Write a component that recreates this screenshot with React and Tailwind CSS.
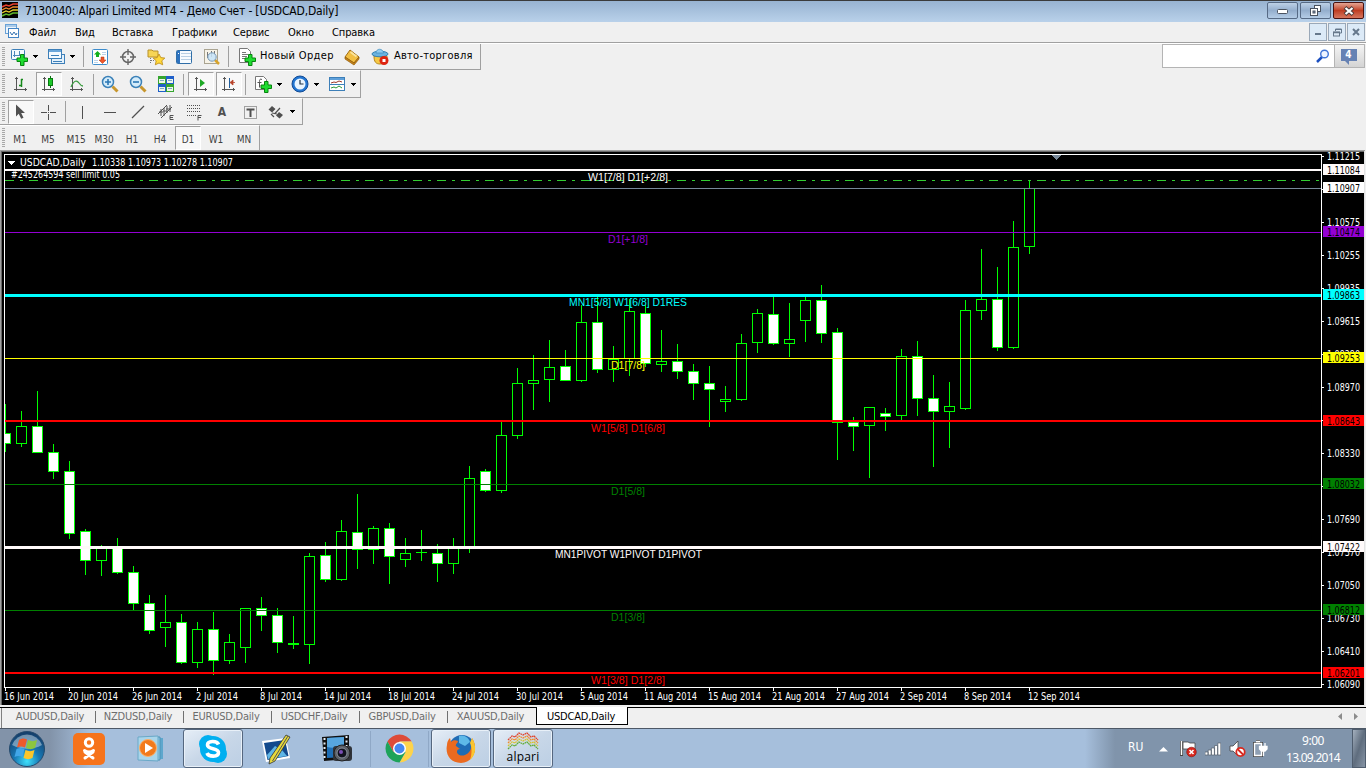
import React from "react";

// x step between bars is 16px, the first bar sits on x = 5
// [high, open/close top, open/close bottom, low, filled]
const candles = [
  [404, 433, 444, 452, 1], [411, 426, 444, 447, 0], [391, 426, 453, 453, 1], [444, 452, 472, 479, 1],
  [461, 471, 534, 539, 1], [529, 531, 561, 575, 1], [545, 546, 561, 576, 0], [538, 547, 573, 574, 1],
  [566, 572, 604, 610, 1], [595, 603, 631, 634, 1], [595, 622, 628, 647, 0], [614, 622, 663, 664, 1],
  [622, 629, 663, 668, 0], [612, 629, 661, 675, 1], [634, 642, 661, 664, 0], [608, 608, 648, 663, 0],
  [597, 608, 616, 631, 1], [608, 615, 643, 653, 1], [616, 643, 645, 649, 0], [553, 556, 645, 664, 0],
  [542, 555, 580, 582, 1], [520, 531, 580, 581, 0], [494, 532, 550, 569, 1], [526, 528, 550, 564, 0],
  [523, 528, 557, 584, 1], [538, 553, 560, 567, 0], [530, 552, 553, 561, 0], [544, 553, 564, 582, 1],
  [538, 546, 564, 574, 0], [466, 478, 548, 553, 0], [469, 471, 491, 492, 1], [421, 435, 491, 493, 0],
  [368, 383, 436, 439, 0], [355, 380, 384, 410, 0], [340, 367, 380, 402, 0], [350, 366, 381, 381, 1],
  [305, 322, 381, 382, 0], [297, 322, 370, 373, 1], [346, 359, 370, 382, 0], [299, 311, 359, 376, 0],
  [305, 313, 364, 367, 1], [330, 361, 365, 372, 0], [344, 361, 372, 379, 1], [364, 371, 384, 400, 1],
  [366, 383, 390, 427, 1], [386, 399, 402, 412, 0], [334, 343, 400, 401, 0], [309, 313, 343, 353, 0],
  [297, 314, 344, 345, 1], [303, 339, 344, 357, 0], [297, 300, 321, 342, 0], [285, 300, 334, 343, 1],
  [328, 332, 423, 460, 1], [417, 422, 427, 451, 1], [407, 407, 426, 478, 0], [408, 413, 417, 431, 1],
  [349, 356, 416, 420, 0], [341, 356, 399, 416, 1], [375, 398, 412, 467, 1], [382, 406, 412, 448, 0],
  [300, 310, 409, 410, 0], [249, 299, 311, 320, 0], [267, 299, 348, 351, 1], [221, 247, 348, 349, 0],
  [180, 188, 247, 254, 0],
];

const levels = [
  { y: 169, h: 2, color: "#fffafa", price: "1.11084", box: 164, text: "W1[7/8] D1[+2/8]", x: 588, w: 80, base: 181 },
  { y: 232, h: 1, color: "#9400d3", price: "1.10474", box: 226, text: "D1[+1/8]", x: 608, w: 40, base: 243 },
  { y: 294, h: 3, color: "#00ffff", price: "1.09863", box: 289, text: "MN1[5/8] W1[6/8] D1RES", x: 569, w: 118, base: 306 },
  { y: 358, h: 1, color: "#ffff00", price: "1.09253", box: 352, text: "D1[7/8]", x: 611, w: 34, base: 369 },
  { y: 420, h: 2, color: "#ff0000", price: "1.08643", box: 415, text: "W1[5/8] D1[6/8]", x: 591, w: 74, base: 432 },
  { y: 484, h: 1, color: "#008000", price: "1.08032", box: 478, text: "D1[5/8]", x: 611, w: 34, base: 495 },
  { y: 546, h: 3, color: "#fffafa", price: "1.07422", box: 541, text: "MN1PIVOT W1PIVOT D1PIVOT", x: 555, w: 147, base: 558 },
  { y: 610, h: 1, color: "#008000", price: "1.06812", box: 604, text: "D1[3/8]", x: 611, w: 34, base: 621 },
  { y: 672, h: 2, color: "#ff0000", price: "1.06201", box: 667, text: "W1[3/8] D1[2/8]", x: 591, w: 74, base: 684 },
];

const prices = [
  "1.11215", "", "1.10575", "1.10255", "1.09935", "1.09615", "1.09290", "1.08970", "",
  "1.08330", "", "1.07690", "1.07370", "1.07050", "1.06730", "1.06410", "1.06090",
];

const dates = [
  ["16 Jun 2014", 50], ["20 Jun 2014", 50], ["26 Jun 2014", 50], ["2 Jul 2014", 42], ["8 Jul 2014", 42],
  ["14 Jul 2014", 47], ["18 Jul 2014", 47], ["24 Jul 2014", 47], ["30 Jul 2014", 47], ["5 Aug 2014", 48],
  ["11 Aug 2014", 53], ["15 Aug 2014", 53], ["21 Aug 2014", 53], ["27 Aug 2014", 53], ["2 Sep 2014", 47],
  ["8 Sep 2014", 47], ["12 Sep 2014", 52],
];

const menu = [
  ["Файл", "w-[46px]"], ["Вид", "w-[37px]"], ["Вставка", "w-[60px]"], ["Графики", "w-[61px]"],
  ["Сервис", "w-[55px]"], ["Окно", "w-[44px]"], ["Справка", "w-[60px]"],
];

const frames = ["M1", "M5", "M15", "M30", "H1", "H4", "D1", "W1", "MN"];
const tabs = ["AUDUSD,Daily", "NZDUSD,Daily", "EURUSD,Daily", "USDCHF,Daily", "GBPUSD,Daily", "XAUUSD,Daily"];

function ChartText({ x, y, w, fill = "#fff", arial, children }) {
  return (
    <text
      x={x}
      y={y}
      fill={fill}
      fontSize={arial ? 11.5 : 10.8}
      textLength={w}
      lengthAdjust="spacingAndGlyphs"
      className={arial ? "font-['Liberation_Sans',sans-serif]" : "font-['DejaVu_Sans_Condensed','DejaVu_Sans',sans-serif]"}
    >
      {children}
    </text>
  );
}

function Chart() {
  return (
    <svg width="1366" height="557" viewBox="0 150 1366 557" className="block" shapeRendering="crispEdges">
      <rect x="0" y="150" width="1366" height="557" fill="#f0f0f0" />
      <rect x="0" y="150" width="1365" height="555" fill="#a0a0a0" />
      <rect x="1" y="151" width="1364" height="554" fill="#696969" />
      <rect x="2" y="152" width="1362" height="553" fill="#000" />
      <rect x="1364" y="151" width="1" height="555" fill="#e3e3e3" />

      {/* Bars */}
      <svg x="5" y="155" width="1316" height="532" viewBox="5 155 1316 532">
        {candles.map(([high, top, bottom, low, filled], i) => {
          const x = 5 + i * 16;
          return (
            <g key={i}>
              <rect x={x} y={high} width="1" height={low - high} fill="#0f0" />
              <rect x={x - 5} y={top} width="11" height={bottom - top} fill="#0f0" />
              {bottom - top > 2 && (
                <rect x={x - 4} y={top + 1} width="9" height={bottom - top - 2} fill={filled ? "#fff" : "#000"} />
              )}
            </g>
          );
        })}
      </svg>

      <ChartText x={11} y={178} w={109}>#245264594 sell limit 0.05</ChartText>

      {/* Pending order and bid price */}
      {Array.from({ length: 55 }, (_, i) => (
        <g key={i} fill="#32cd32">
          <rect x={5 + i * 24} y="180" width="9" height="1" />
          <rect x={20 + i * 24} y="180" width="3" height="1" />
        </g>
      ))}
      <rect x="5" y="188" width="1316" height="1" fill="#778899" />

      {levels.map((l) => (
        <g key={l.y}>
          <rect x="5" y={l.y} width="1316" height={l.h} fill={l.color} />
          <ChartText arial x={l.x} y={l.base} w={l.w} fill={l.color}>{l.text}</ChartText>
        </g>
      ))}

      {/* Frame */}
      <rect x="4" y="154" width="1318" height="1" fill="#fff" />
      <rect x="4" y="154" width="1" height="534" fill="#fff" />
      <rect x="4" y="687" width="1318" height="1" fill="#fff" />
      <rect x="1321" y="154" width="1" height="534" fill="#fff" />
      <path d="M1052 155h9v1h-1v1h-1v1h-1v1h-1v1h-1v-1h-1v-1h-1v-1h-1v-1h-1z" fill="#778899" />

      <path d="M8 161h7v1h-1v1h-1v1h-1v1h-1v-1h-1v-1h-1v-1h-1z" fill="#fff" />
      <ChartText x={20} y={166} w={66}>USDCAD,Daily</ChartText>
      <ChartText x={92} y={166} w={141}>1.10338 1.10973 1.10278 1.10907</ChartText>

      {/* Price scale */}
      <svg x="1322" y="152" width="42" height="545" viewBox="1322 152 42 545">
        {prices.map((p, i) => (
          <g key={i}>
            <rect x="1322" y={156 + i * 33} width="2" height="1" fill="#fff" />
            {p && <ChartText x={1327} y={159.500 + i * 33} w={33}>{p}</ChartText>}
          </g>
        ))}
        {levels.map((l) => (
          <g key={l.y}>
            <rect x="1323" y={l.box} width="41" height="11" fill={l.color} />
            <ChartText x={1327} y={l.box + 9.500} w={33} fill="#000">{l.price}</ChartText>
          </g>
        ))}
        <rect x="1323" y="182" width="41" height="11" fill="#fff" />
        <ChartText x={1327} y={191.500} w={33} fill="#000">1.10907</ChartText>
      </svg>

      {/* Time scale */}
      {dates.map(([d, w], i) => (
        <g key={d}>
          <rect x={5 + i * 64} y="688" width="1" height="3" fill="#fff" />
          <ChartText x={4 + i * 64} y={700} w={w}>{d}</ChartText>
        </g>
      ))}
    </svg>
  );
}

function Icon({ children, size = 18 }) {
  return (
    <svg width={size} height={size} viewBox="0 0 18 18" className="shrink-0 block">
      {children}
    </svg>
  );
}

const plus = <path d="M10.500 6.500h3.500v3.500h3.500v3.500H14V17.500h-3.500V13.500H7V10h3.500z" fill="#1fdc30" stroke="#07830f" />;
const axes = <path d="M4.500 2v14M2 14.500h13M3 3.500h3M13.500 13v3" stroke="#555" fill="none" />;

const icons = {
  newChart: (
    <Icon>
      <rect x="1.500" y="1.500" width="13" height="10" rx="1" fill="#f4faff" stroke="#3d7fb8" />
      <path d="M4.500 3v6M3 7.500h9M9.500 3v5" stroke="#4b87ba" fill="none" />
      {plus}
    </Icon>
  ),
  profiles: (
    <Icon>
      <rect x="4.500" y="6.500" width="13" height="9" fill="#e3f1fc" stroke="#3d7fb8" />
      <rect x="1.500" y="1.500" width="13" height="9" fill="#f4faff" stroke="#3d7fb8" />
      <path d="M2 3h12" stroke="#6ba7db" strokeWidth="2" />
      <path d="M4 7.500h8M6 13.500h9" stroke="#3d7fb8" />
    </Icon>
  ),
  market: (
    <Icon>
      <rect x="1.500" y="1.500" width="15" height="15" rx="1" fill="#fff" stroke="#3d8ccc" />
      <path d="M6.500 3l3.500 3.500H8V9H5V6.500H3z" fill="#13b01c" />
      <path d="M11.500 15.500L8 12h2V9h3v3h2z" fill="#f0562a" stroke="#a8300f" strokeWidth=".5" />
      <path d="M11 4.500h4M11 6.500h4M3 12.500h4M3 14.500h4" stroke="#bcd3e8" />
    </Icon>
  ),
  target: (
    <Icon>
      <circle cx="9" cy="9" r="5.500" fill="none" stroke="#666" strokeWidth="1.500" />
      <path d="M9 1v6M9 11v6M1 9h6M11 9h6" stroke="#666" strokeWidth="1.400" />
    </Icon>
  ),
  navigator: (
    <Icon>
      <path d="M1 2h4l1 1h5v6H1z" fill="#f7d555" stroke="#b8912a" />
      <path d="M3.500 10v5M4 12.500h4" stroke="#777" strokeDasharray="1 1" />
      <path d="M12 6l1.800 3.600 4 .5-3 2.700.9 4L12 15l-3.700 1.800.9-4-3-2.700 4-.5z" fill="#ffd83b" stroke="#b9860f" strokeWidth=".8" />
    </Icon>
  ),
  terminal: (
    <Icon>
      <rect x="1.500" y="2.500" width="15" height="13" rx="1" fill="#f6fbff" stroke="#2f6ea8" />
      <rect x="2" y="3" width="3" height="12" fill="#2d72bf" />
      <path d="M6 5.500h10M6 8.500h10M6 11.500h10" stroke="#b8cfe4" />
      <path d="M3 5.500h1" stroke="#fff" />
    </Icon>
  ),
  tester: (
    <Icon>
      <rect x="1.500" y="1.500" width="13" height="14" fill="#f7f3e8" stroke="#aaa491" />
      <path d="M4.500 4v6M8.500 3v6M11.500 3v3" stroke="#777" />
      <path d="M12 12l4 4" stroke="#d8a42c" strokeWidth="2.500" />
      <circle cx="9" cy="9" r="4.200" fill="#c7e3f8" fillOpacity=".85" stroke="#7898b5" />
    </Icon>
  ),
  order: (
    <Icon>
      <path d="M1.500 .5h8l3 3v11h-11z" fill="#fff" stroke="#777" />
      <path d="M4 4.500h4M4 6.500h6M4 8.500h5M4 10.500h3" stroke="#777" />
      {plus}
    </Icon>
  ),
  book: (
    <Icon>
      <path d="M7 2l9 7-5 6-9-6z" fill="#f2bf43" stroke="#a06c12" />
      <path d="M2 9v2l9 6 5-6V9l-5 6z" fill="#c98517" stroke="#8f5c0c" strokeWidth=".7" />
      <path d="M7.500 4l6 4.500" stroke="#fbe39a" strokeWidth="2" />
    </Icon>
  ),
  expert: (
    <Icon>
      <path d="M3 8c0 6 2 8 6 8s7-3 7-8z" fill="#f5c945" stroke="#b5851a" />
      <ellipse cx="9" cy="6" rx="8" ry="2.800" fill="#6bb3df" stroke="#3381b3" />
      <path d="M5 5C5 0 12 0 12.500 5z" fill="#93cdf0" stroke="#3c8bbd" strokeWidth=".7" />
      <circle cx="13" cy="12.500" r="4.500" fill="#de2410" />
      <rect x="11.500" y="11" width="3" height="3" fill="#fff" />
    </Icon>
  ),
  bars: (
    <Icon>
      {axes}
      <path d="M9.500 4v8M11 4.500h-2M9 10.500H7" stroke="#15881b" strokeWidth="1.500" fill="none" />
    </Icon>
  ),
  candle: (
    <Icon>
      {axes}
      <path d="M10.500 1v12" stroke="#0a700f" />
      <rect x="8.500" y="3.500" width="4" height="7" fill="#1dc92a" stroke="#0a7a12" />
    </Icon>
  ),
  line: (
    <Icon>
      {axes}
      <path d="M3 12c3-7 6-7 8-4s3 3 4 3" stroke="#3a9c3f" strokeWidth="1.300" fill="none" />
    </Icon>
  ),
  zoomIn: (
    <Icon>
      <path d="M11.500 11.500l5 5" stroke="#c7962c" strokeWidth="3" />
      <circle cx="7" cy="7" r="5.500" fill="#d5ecfa" stroke="#3b81b8" strokeWidth="1.500" />
      <path d="M7 4v6M4 7h6" stroke="#2c78b5" strokeWidth="1.600" />
    </Icon>
  ),
  zoomOut: (
    <Icon>
      <path d="M11.500 11.500l5 5" stroke="#c7962c" strokeWidth="3" />
      <circle cx="7" cy="7" r="5.500" fill="#d5ecfa" stroke="#3b81b8" strokeWidth="1.500" />
      <path d="M4 7h6" stroke="#2c78b5" strokeWidth="1.600" />
    </Icon>
  ),
  tile: (
    <Icon>
      <path d="M1 1h8v8H1zM9 9h8v8H9z" fill="#35a52f" />
      <path d="M9 1h8v8H9zM1 9h8v8H1z" fill="#1f5fc9" />
      <path d="M2 4h6v4H2zM10 4h6v4h-6zM2 12h6v4H2zM10 12h6v4h-6z" fill="#eef7e9" />
      <path d="M3 5.500h4M11 5.500h4M3 13.500h4M11 13.500h4" stroke="#7fa9c4" />
    </Icon>
  ),
  scroll: (
    <Icon>
      {axes}
      <path d="M8 4l5 4-5 4z" fill="#1da825" />
    </Icon>
  ),
  shift: (
    <Icon>
      {axes}
      <path d="M9.500 3v10" stroke="#225f9c" />
      <path d="M10 7.500l3-2.500v5zM12 7.500h3" fill="#b8432a" stroke="#b8432a" strokeWidth=".8" />
    </Icon>
  ),
  indicator: (
    <Icon>
      <path d="M1.500 1.500h8l3 3v10h-11z" fill="#fff" stroke="#777" />
      <path d="M8 4.500c-2-1-2.500 0-2.500 2v6M3.500 7.500h4" stroke="#555" fill="none" />
      {plus}
    </Icon>
  ),
  clock: (
    <Icon>
      <circle cx="9" cy="9" r="8" fill="#2376d2" stroke="#114a94" />
      <circle cx="9" cy="9" r="5.500" fill="#e9f5ff" />
      <path d="M9 5v4h3.500" stroke="#234" fill="none" strokeWidth="1.200" />
    </Icon>
  ),
  template: (
    <Icon>
      <rect x="1.500" y="2.500" width="15" height="13" fill="#fff" stroke="#3d7fb8" />
      <rect x="2" y="3" width="14" height="2" fill="#5fa0da" />
      <path d="M2 9.500h14" stroke="#3d7fb8" />
      <path d="M3 8l3-1 2 .5 3-1.500 3 1" stroke="#a03a2a" fill="none" />
      <path d="M3 13l3-1 2 1 3-2 3 2" stroke="#2b9a35" fill="none" />
    </Icon>
  ),
  cursor: (
    <Icon>
      <path d="M4 1.500v12l2.700-2.700 2.500 5 2.300-1-2.300-4.800H13z" fill="#505050" />
    </Icon>
  ),
  cross: (
    <Icon>
      <path d="M8.500 2v6M8.500 11v6M1 9.500h6M10 9.500h6M8 9.500h1" stroke="#505050" />
    </Icon>
  ),
  vline: <Icon><path d="M9.500 3v13" stroke="#505050" /></Icon>,
  hline: <Icon><path d="M3 9.500h12" stroke="#505050" /></Icon>,
  trend: <Icon><path d="M3 15L15 3" stroke="#505050" strokeWidth="1.200" /></Icon>,
  channel: (
    <Icon>
      <path d="M1 11L10 2M4 15L15 4M4 6v7M7 5v8M10 3v7M13 2v7M2 9h4M6 8h4M9 6h5" stroke="#505050" fill="none" />
      <path d="M16.500 12.500h-3.500v4h3.500M13 14.500h3" stroke="#505050" fill="none" />
    </Icon>
  ),
  fibo: (
    <Icon>
      <path d="M2 2.500h14M2 5.500h14M2 8.500h14M2 12.500h9" stroke="#505050" strokeDasharray="1 1" />
      <path d="M16.500 12.500H13v5M13 14.500h3" stroke="#505050" fill="none" />
    </Icon>
  ),
  label: (
    <Icon>
      <path d="M3.500 3.500h12v12h-12z" fill="none" stroke="#505050" strokeDasharray="1 1" />
      <path d="M5.500 6.500h8M9.500 6v8" stroke="#505050" strokeWidth="2" fill="none" />
    </Icon>
  ),
  arrows: (
    <Icon>
      <path d="M5 3l3.500 3L5 9.500 1.500 6.500zM12 9l4 3-3.500 3.500L9 12.500z" fill="#505050" />
      <path d="M4 11l3 3M13 5l-5.500 6M5 10l5 1" stroke="#505050" strokeWidth="1.200" />
    </Icon>
  ),
};

const pressedBox =
  "w-[26px] h-[24px] flex items-center justify-center bg-[#f8f8f8] border border-t-[#a0a0a0] border-l-[#a0a0a0] border-r-white border-b-white";

function Tool({ icon, pressed }) {
  return (
    <div className="w-7 shrink-0 flex justify-center">
      <div className={pressed ? pressedBox : "w-[26px] h-[24px] flex items-center justify-center"}>
        {icons[icon]}
      </div>
    </div>
  );
}

function Drop({ icon }) {
  return (
    <div className="w-[37px] shrink-0 flex items-center pl-[3px]">
      {icons[icon]}
      <svg width="5" height="3" viewBox="0 0 5 3" className="ml-[5px]">
        <path d="M0 0h5v1H4v1H3v1H2V2H1V1H0z" fill="#000" />
      </svg>
    </div>
  );
}

const Sep = ({ className = "mx-0.5" }) => <div className={`w-px h-[21px] bg-[#a0a0a0] shrink-0 ${className}`} />;

function Grip() {
  return (
    <svg width="3" height="20" className="ml-0.5 mr-0.5 shrink-0">
      <path d="M1.500 0v20" stroke="#a8a8a8" strokeWidth="3" strokeDasharray="1 1" />
    </svg>
  );
}

function Bar({ className, children }) {
  return (
    <div className={`flex items-center border-b border-r border-[#a0a0a0] ${className}`}>
      <Grip />
      {children}
    </div>
  );
}

function TitleBar() {
  const btn = "w-[31px] h-[17px] rounded-[2px] border flex items-center justify-center";
  return (
    <div className="h-[22px] border-t border-[#3b3b3b] bg-gradient-to-b from-[#98b3d1] to-[#b9d1ea] flex items-start pl-0.5">
      <svg width="16" height="16" className="mt-px shrink-0">
        <rect width="16" height="16" fill="#000" />
        <path d="M0 5l4-2 3 1 4-2 5 0" stroke="#e8402e" strokeWidth="1.600" fill="none" />
        <path d="M0 8l4-2 3 1 4-2 5 0" stroke="#f08a2c" strokeWidth="1.300" fill="none" />
        <path d="M0 11l4-2 3 1 4-2 5 0" stroke="#e6d02c" strokeWidth="1.300" fill="none" />
        <path d="M0 14l4-2 3 1 4-2 5 0" stroke="#5eb82c" strokeWidth="1.600" fill="none" />
      </svg>
      <span className="ml-[7px] mt-0.5 text-[12px] leading-4 tracking-[-0.18px] whitespace-nowrap">
        7130040: Alpari Limited MT4 - Демо Счет - [USDCAD,Daily]
      </span>
      <div className="ml-auto mr-0.5 mt-px flex gap-0.5">
        <div className={`${btn} border-[#566a85] bg-gradient-to-b from-[#bdd0e6] via-[#94aecd] to-[#b4cce6]`}>
          <svg width="12" height="6"><rect x=".5" y="1.500" width="10" height="4" rx="1" fill="#fff" stroke="#4a5360" /></svg>
        </div>
        <div className={`${btn} border-[#566a85] bg-gradient-to-b from-[#bdd0e6] via-[#94aecd] to-[#b4cce6]`}>
          <svg width="12" height="11">
            <rect x="4.500" y=".5" width="6" height="6" fill="#fff" stroke="#4a5360" />
            <rect x=".5" y="3.500" width="7" height="7" fill="#fff" stroke="#4a5360" />
            <rect x="3" y="6" width="2" height="2" fill="#8ea9c9" stroke="#4a5360" />
          </svg>
        </div>
        <div className={`${btn} border-[#4a1210] bg-gradient-to-b from-[#e3a493] via-[#bf3d22] to-[#d6755d]`}>
          <svg width="12" height="10">
            <path d="M2 1.500l8 7M10 1.500l-8 7" stroke="#4a3a3a" strokeWidth="4" />
            <path d="M2.500 2l7 6M9.500 2l-7 6" stroke="#fff" strokeWidth="2.200" />
          </svg>
        </div>
      </div>
    </div>
  );
}

function MenuBar() {
  const btn = "w-[18px] h-[18px] border border-[#9aa8b8] bg-[#dceaf7] flex items-center justify-center";
  return (
    <div className="h-[21px] flex items-start border-b border-[#a0a0a0]">
      <svg width="16" height="16" className="ml-1 mr-[9px] mt-0.5 shrink-0">
        <rect x="1.500" y=".5" width="11" height="9" fill="#eef6fd" stroke="#6aa2d6" />
        <rect x="4.500" y="4.500" width="10" height="9" fill="#fff" stroke="#4384c4" />
        <path d="M6 8l2 3 2-3 2 3 1-2" stroke="#3572b0" fill="none" />
        <path d="M2 2h10" stroke="#6aa2d6" />
      </svg>
      {menu.map(([m, w]) => (
        <span key={m} className={`${w} shrink-0 text-[11px] leading-[21px] tracking-[-0.1px]`}>{m}</span>
      ))}
      <div className="ml-auto mr-px mt-px flex gap-px">
        <div className={btn}><svg width="8" height="8"><path d="M1 6h6" stroke="#66788c" strokeWidth="2" /></svg></div>
        <div className={btn}>
          <svg width="9" height="9">
            <path d="M2.500 3V1h6v4H7M2.500 1.500h6" stroke="#66788c" fill="none" />
            <rect x=".5" y="4" width="6" height="4" stroke="#66788c" fill="none" />
            <path d="M0 4.500h7" stroke="#66788c" strokeWidth="1.500" />
          </svg>
        </div>
        <div className={btn}><svg width="8" height="8"><path d="M1 1l6 6M7 1L1 7" stroke="#66788c" strokeWidth="2" /></svg></div>
      </div>
    </div>
  );
}

function Toolbars() {
  return (
    <div className="h-[107px] flex justify-between border-t border-white">
      <div className="flex flex-col items-start">
        <Bar className="h-[26px] w-[481px]">
          <Drop icon="newChart" />
          <Drop icon="profiles" />
          <Sep />
          <Tool icon="market" />
          <Tool icon="target" />
          <Tool icon="navigator" />
          <Tool icon="terminal" />
          <Tool icon="tester" />
          <Sep />
          <span className="ml-[7px] mr-1 shrink-0">{icons.order}</span>
          <span className="w-[83px] shrink-0 text-[11px] whitespace-nowrap tracking-[0.35px]">Новый Ордер</span>
          <span className="w-[28px] shrink-0">{icons.book}</span>
          <span className="w-[23px] shrink-0">{icons.expert}</span>
          <span className="text-[11px] whitespace-nowrap tracking-[0.25px]">Авто-торговля</span>
        </Bar>
        <Bar className="h-[28px] w-[361px] border-t border-t-white">
          <Tool icon="bars" />
          <Tool icon="candle" pressed />
          <Tool icon="line" />
          <Sep />
          <Tool icon="zoomIn" />
          <Tool icon="zoomOut" />
          <Tool icon="tile" />
          <Sep className="ml-[3px] mr-[3px]" />
          <Tool icon="scroll" pressed />
          <Tool icon="shift" pressed />
          <Sep className="ml-0.5 mr-[5px]" />
          <Drop icon="indicator" />
          <Drop icon="clock" />
          <Drop icon="template" />
        </Bar>
        <Bar className="h-[27px] w-[303px] border-t border-t-white">
          <Tool icon="cursor" pressed />
          <Tool icon="cross" />
          <Sep />
          <Tool icon="vline" />
          <Tool icon="hline" />
          <Tool icon="trend" />
          <Tool icon="channel" />
          <Tool icon="fibo" />
          <span className="w-7 shrink-0 text-center text-[12px] font-bold text-[#505050]">A</span>
          <Tool icon="label" />
          <Drop icon="arrows" />
        </Bar>
        <div className="h-[25px] w-[260px] flex items-center border-r border-[#a0a0a0] border-t border-t-white">
          <Grip />
          <div className="flex -ml-px">
            {frames.map((f) => (
              <div key={f} className="w-7 shrink-0 flex justify-center text-[10px] text-[#404040]">
                <span className={f === "D1" ? `${pressedBox} pt-0.5` : "h-[24px] flex items-center pt-0.5"}>{f}</span>
              </div>
            ))}
          </div>
        </div>
      </div>

      {/* Search */}
      <div className="flex h-[24px] mr-px">
        <div className="w-[173px] bg-white border border-[#b4b4b4] flex items-center justify-end pr-1">
          <svg width="14" height="14">
            <path d="M1 13l5-5" stroke="#1b4fc0" strokeWidth="2.500" />
            <circle cx="8.500" cy="5" r="3.800" fill="#eef4ff" stroke="#3f73d6" strokeWidth="1.400" />
          </svg>
        </div>
        <div className="w-[30px] border border-l-0 border-[#b4b4b4] bg-gradient-to-b from-[#f4f4f4] to-[#d4d4d4] flex items-center justify-center">
          <div className="relative w-4 h-3 mb-0.5 mr-0.5 bg-[#6682b4] text-white text-[10px] font-bold leading-3 text-center">
            4
            <svg width="5" height="4" className="absolute left-1 top-3"><path d="M0 0h4v4z" fill="#6682b4" /></svg>
          </div>
        </div>
      </div>
    </div>
  );
}

function Tabs() {
  return (
    <div className="h-[21px] border-t border-black flex items-start text-[11px] text-[#6d6d6d] bg-[#f0f0f0]">
      <div className="w-px h-5 bg-[#808080] ml-px mr-[6px]" />
      {tabs.map((t, i) => (
        <div
          key={t}
          className={`w-[88px] shrink-0 h-3 mt-[3px] pr-[3px] flex items-center justify-center tracking-[-0.22px] ${i < 5 ? "border-r border-[#707070]" : ""}`}
        >
          {t}
        </div>
      ))}
      <div className="w-[92px] h-[18px] -mt-px pt-[3px] pr-0.5 bg-white border border-t-0 border-black text-black flex items-center justify-center tracking-[-0.2px]">
        USDCAD,Daily
      </div>
      <svg width="22" height="9" className="ml-auto mr-[7px] mt-1">
        <path d="M5 1v7L1 4.500zM17 1v7l4-3.500z" fill="#8c8c8c" />
      </svg>
    </div>
  );
}

function TaskButton({ active, children }) {
  return (
    <div
      className={
        active
          ? "w-[60px] h-[39px] shrink-0 rounded-[3px] border border-[#55677f] bg-gradient-to-br from-[#e6eef7] via-[#c8d7e8] to-[#bccfe4] flex items-center justify-center shadow-[inset_0_0_0_1px_#e8f0f8]"
          : "w-[62px] h-[39px] shrink-0 flex items-center justify-center"
      }
    >
      {children}
    </div>
  );
}

function Taskbar() {
  return (
    <div className="h-10 border-t border-[#4d5866] bg-[linear-gradient(90deg,#8293a9_0,#8293a9_50px,#a6bfdc_90px,#a6bfdc_1085px,#8094ab_1115px,#8094ab_100%)] flex items-center">
      <svg width="38" height="38" viewBox="0 0 38 38" className="ml-2 mr-[12px] shrink-0">
        <defs>
          <radialGradient id="orb" cx=".5" cy=".85" r=".8">
            <stop offset="0" stopColor="#3fe0fb" />
            <stop offset=".45" stopColor="#1879b5" />
            <stop offset="1" stopColor="#15406d" />
          </radialGradient>
        </defs>
        <circle cx="19" cy="19" r="17.500" fill="url(#orb)" stroke="#254a6d" />
        <path d="M4 15a16 16 0 0 1 30 0c-9 5-20 5-30 0z" fill="#fff" fillOpacity=".4" />
        <path d="M11 10c3-2 5-2 8-.5l-2 8c-3-1.500-5-1.500-8 0z" fill="#ee5a2b" />
        <path d="M20 10c3 1.500 6 1.500 9 0l-2 8c-3 1.500-6 1.500-9 0z" fill="#8cc63f" />
        <path d="M8.500 19c3-1.500 5-1.500 8 0l-2 8c-3-1.500-5-1.500-8 0z" fill="#41a6e8" />
        <path d="M17.500 20c3 1.500 6 1.500 9 0l-2 8c-3 1.500-6 1.500-9 0z" fill="#fcc62a" />
      </svg>
      <TaskButton>
        <svg width="32" height="32">
          <rect width="32" height="32" rx="5" fill="#f6731b" />
          <circle cx="16" cy="9.500" r="3.700" fill="none" stroke="#fff" strokeWidth="3" />
          <path d="M11.500 17.500c3 2 6 2 9 0M12 25l8-6M20 25l-8-6" stroke="#fff" strokeWidth="3" strokeLinecap="round" fill="none" />
        </svg>
      </TaskButton>
      <TaskButton>
        <svg width="28" height="28">
          <path d="M16 3h10v21H16z" fill="#5ea7cd" />
          <path d="M13 2h10v23H13z" fill="#8fc8e4" stroke="#4c93b8" />
          <path d="M1 2l20-1v25l-20-1z" fill="#a9d5ea" stroke="#6aa9c8" />
          <circle cx="11" cy="13" r="8.500" fill="#f27a1c" stroke="#fbb06a" />
          <path d="M8 8l8 5-8 5z" fill="#fff" />
        </svg>
      </TaskButton>
      <div className="ml-px mr-0.5 flex">
        <TaskButton active>
          <svg width="30" height="30">
            <circle cx="10" cy="10" r="9" fill="#00aff0" />
            <circle cx="20" cy="20" r="9" fill="#00aff0" />
            <circle cx="15" cy="15" r="13" fill="#00aff0" />
            <path d="M20.500 10.500C19 6.500 9.500 6.500 9.500 11c0 5 11 2.500 11 7.500 0 5-10 4.500-11.500.5" fill="none" stroke="#fff" strokeWidth="3.600" />
          </svg>
        </TaskButton>
      </div>
      <TaskButton>
        <svg width="30" height="32">
          <path d="M1 8l24-3 4 20-24 4z" fill="#fff" />
          <path d="M3 10l21-3 3.500 16-21 4z" fill="#134a8d" />
          <path d="M6 22l8-9 7 4 5 6-19 3z" fill="#5fb6e6" />
          <path d="M25 2l4 2L14 28l-6 3 1-6z" fill="#e6d93a" stroke="#333" strokeWidth=".8" />
          <path d="M27 3L11.500 28" stroke="#555" fill="none" />
        </svg>
      </TaskButton>
      <TaskButton>
        <svg width="32" height="30" className="-ml-0.5">
          <path d="M1 3l27-2v24l-25 2z" fill="#111" />
          <path d="M6 4l17-1v20l-17 1z" fill="#1e6eb5" />
          <path d="M6 4l17-1v7c-6 3-10 5-17 3z" fill="#57a6df" />
          <path d="M3.500 4v22M25.500 2v22" stroke="#e6eef5" strokeWidth="2" strokeDasharray="2 2.500" />
          <rect x="12" y="12" width="19" height="15" rx="3" fill="#30343a" />
          <circle cx="21" cy="19" r="8" fill="#5b6068" stroke="#222" />
          <circle cx="21" cy="19" r="5" fill="#11131f" stroke="#8c93a0" />
          <circle cx="20" cy="18" r="2" fill="#7a4fb5" />
        </svg>
      </TaskButton>
      <div className="w-px h-9 bg-[#8fa8c6] ml-px" />
      <div className="w-[57px] flex justify-center">
        <svg width="29" height="29" viewBox="-14.500 -14.500 29 29">
          <path d="M-12.120 -7A14 14 0 0 1 12.120 -7L0 -7L-6.060 3.500Z" fill="#dd4b39" />
          <path d="M12.120 -7A14 14 0 0 1 0 14L6.060 3.500L0 -7Z" fill="#fdd34b" />
          <path d="M0 14A14 14 0 0 1 -12.120 -7L-6.060 3.500L6.060 3.500Z" fill="#1ea35a" />
          <circle r="6.500" fill="#fff" />
          <circle r="5" fill="#4587f0" />
        </svg>
      </div>
      <div className="w-px h-9 bg-[#8fa8c6]" />
      <div className="ml-0.5 flex gap-0.5">
        <TaskButton active>
          <svg width="32" height="32">
            <circle cx="17" cy="15" r="13" fill="#1f6cb5" />
            <path d="M14 3c5-2 10 2 11 6l-5 4-6-3z" fill="#5eb9e8" />
            <path d="M27 5c6 9 3 24-11 25C5 30 0 21 2 12c0-3 1-5 3-7l1 4c2-2 4-2 7-1 0 2-3 3-2 5l4 3c-3 0-4 3-2 5 4 4 12 0 13-6 1-4 1-7 1-10z" fill="#ea6a20" />
            <path d="M27 5c5 8 4 17-2 22 2-6 2-13 0-17z" fill="#fbc52f" />
          </svg>
        </TaskButton>
        <TaskButton active>
          <div className="flex flex-col items-center -mt-px">
            <svg width="32" height="18" fill="none" strokeWidth="1.300">
              <path d="M1 8l4-4 3 1 4-4 4 2 4-2 4 4 3-1 4 4" stroke="#e0442c" strokeDasharray="1.800 .5" />
              <path d="M1 11l4-4 3 1 4-4 4 2 4-2 4 4 3-1 4 4" stroke="#f08a2a" strokeDasharray="1.800 .5" />
              <path d="M1 14l4-4 3 1 4-4 4 2 4-2 4 4 3-1 4 4" stroke="#d8c030" strokeDasharray="1.800 .5" />
              <path d="M1 17l4-4 3 1 4-4 4 2 4-2 4 4 3-1 4 4" stroke="#62ac38" strokeDasharray="1.800 .5" />
            </svg>
            <span className="text-[12px] leading-[14px] tracking-[0.2px] font-['Open_Sans',sans-serif] text-black">alpari</span>
          </div>
        </TaskButton>
      </div>

      {/* Tray */}
      <div className="ml-auto flex items-center text-white text-[12px]">
        <span className="w-[31px] pb-1 tracking-[-0.1px]">RU</span>
        <svg width="9" height="5" className="mr-[12px] mt-0.5"><path d="M0 4.500L4.500 0 9 4.500z" fill="#fff" /></svg>
        <svg width="17" height="18" className="mr-2">
          <path d="M1.500 1v15" stroke="#444" strokeWidth="3" />
          <path d="M1.500 1v14" stroke="#fff" strokeWidth="1.500" />
          <path d="M3 2h5l2 1h5v8H9L8 9H3z" fill="#fff" stroke="#444" strokeWidth=".8" />
          <circle cx="11.500" cy="12" r="4.800" fill="#d8281e" stroke="#8a0f0a" strokeWidth=".6" />
          <path d="M9.500 10l4 4M13.500 10l-4 4" stroke="#fff" strokeWidth="1.600" />
        </svg>
        <svg width="16" height="14" className="mr-2">
          <path d="M0 10h3v3H0zM3.200 8h3v5h-3zM6.400 6h3v7h-3zM9.600 3.500h3V13h-3zM12.800 1h3v12h-3z" fill="#fff" stroke="#555f6c" strokeWidth=".7" />
        </svg>
        <svg width="17" height="18" className="mr-[6px]">
          <path d="M1 6h3l5-5v15l-5-5H1z" fill="#fff" stroke="#444" strokeWidth=".8" />
          <circle cx="11.500" cy="12" r="4.200" fill="#fff" stroke="#d8281e" strokeWidth="1.800" />
          <path d="M8.500 9l6 6" stroke="#d8281e" strokeWidth="1.800" />
        </svg>
        <svg width="16" height="18" className="mr-[17px]">
          <path d="M2.500 3.500h7v12h-7zM4 1.500h4" fill="#8e9fb3" stroke="#444" strokeWidth="3" />
          <path d="M2.500 3.500h7v12h-7zM4 1.500h4" fill="#8e9fb3" stroke="#fff" strokeWidth="1.400" />
          <path d="M9.500 3v3M13 3v3M7.500 6.500h7.500v2.500l-2 2h-3.500l-2-2zM11.500 11v5" fill="#fff" stroke="#fff" strokeWidth="1.300" />
        </svg>
        <div className="w-[58px] text-center text-[12px] leading-[17px] tracking-[-0.75px] font-['Noto_Sans',sans-serif] -ml-px mt-px">
          <div className="tracking-[-0.5px]">9:00</div>
          <div>13.09.2014</div>
        </div>
        <div className="ml-2.5 w-[14px] h-[39px] border border-[#4f5d6e] bg-gradient-to-br from-[#a4b0be] via-[#5f6d7e] to-[#8795a6]" />
      </div>
    </div>
  );
}

export default function App() {
  return (
    <div className="w-[1366px] h-[768px] overflow-hidden bg-[#f0f0f0] text-black font-['DejaVu_Sans_Condensed','DejaVu_Sans',sans-serif]">
      <TitleBar />
      <MenuBar />
      <Toolbars />
      <Chart />
      <Tabs />
      <Taskbar />
    </div>
  );
}
